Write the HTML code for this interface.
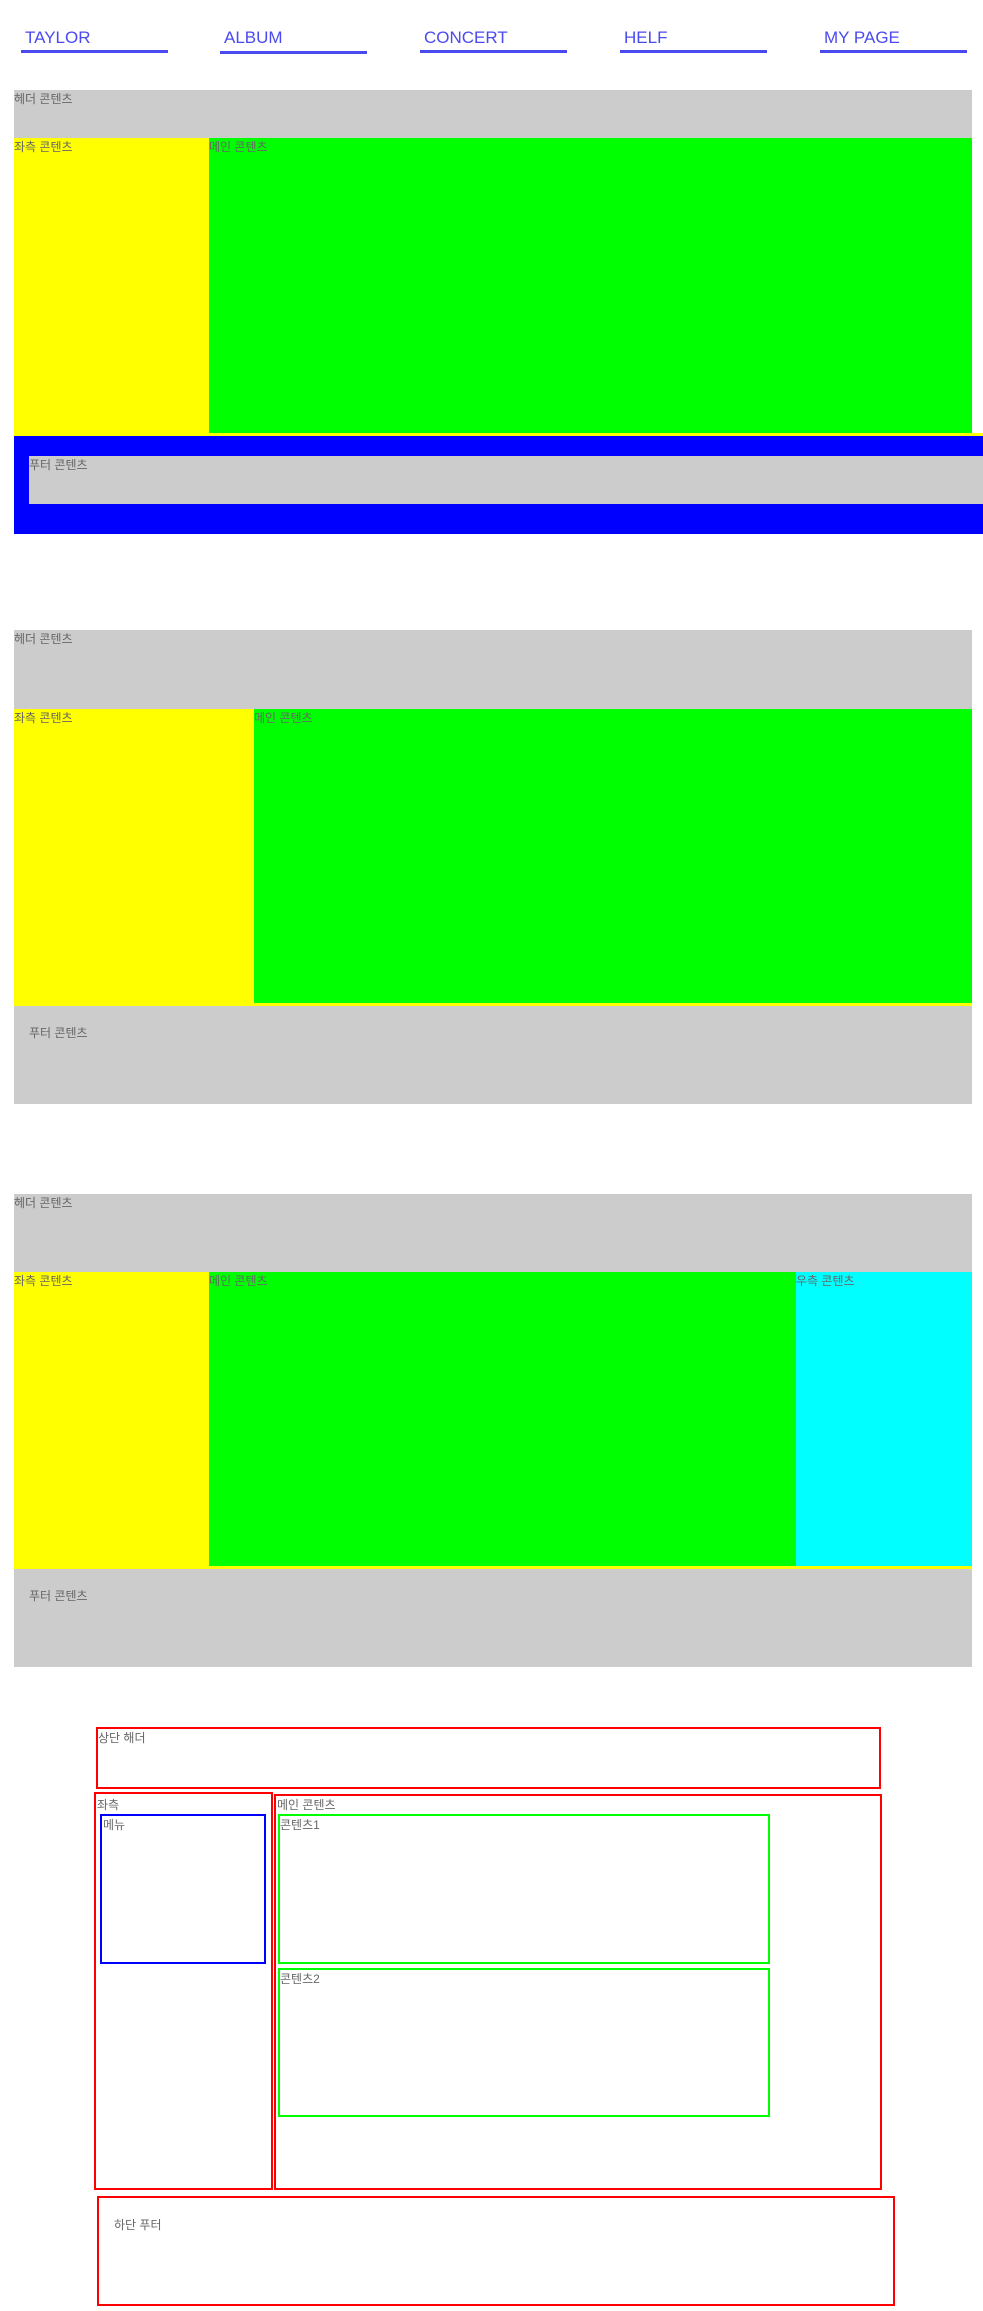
<!DOCTYPE html>
<html><head><meta charset="utf-8"><style>
*{margin:0;padding:0;box-sizing:border-box}
body{width:983px;height:2311px;position:relative;background:#fff;font-family:"Liberation Sans","Noto Sans CJK KR",sans-serif;overflow:hidden}
.a{position:absolute}
.t{font-size:12px;color:#666;line-height:14px}
.nav{position:absolute;top:29px;font-size:17px;color:#4a4af0;line-height:17px}
.ul{position:absolute;height:3px;background:#4a4af0;width:147px}
.b{position:absolute;border:2px solid red}
</style></head><body>
<div class="nav" style="left:25px">TAYLOR</div><div class="ul" style="left:21px;top:50px"></div>
<div class="nav" style="left:224px">ALBUM</div><div class="ul" style="left:220px;top:51px"></div>
<div class="nav" style="left:424px">CONCERT</div><div class="ul" style="left:420px;top:50px"></div>
<div class="nav" style="left:624px">HELF</div><div class="ul" style="left:620px;top:50px"></div>
<div class="nav" style="left:824px">MY PAGE</div><div class="ul" style="left:820px;top:50px"></div>

<!-- section 1 -->
<div class="a t" style="left:14px;top:90px;width:958px;height:48px;background:#ccc;padding-top:2px">헤더 콘텐츠</div>
<div class="a" style="left:14px;top:433px;width:969px;height:3px;background:#ff0"></div>
<div class="a t" style="left:14px;top:138px;width:195px;height:298px;background:#ff0;padding-top:2px">좌측 콘텐츠</div>
<div class="a t" style="left:209px;top:138px;width:763px;height:295px;background:#0f0;padding-top:2px">메인 콘텐츠</div>
<div class="a" style="left:14px;top:436px;width:969px;height:98px;background:#00f"></div>
<div class="a t" style="left:29px;top:456px;width:954px;height:48px;background:#ccc;padding-top:2px">푸터 콘텐츠</div>

<!-- section 2 -->
<div class="a t" style="left:14px;top:630px;width:958px;height:79px;background:#ccc;padding-top:2px">헤더 콘텐츠</div>
<div class="a" style="left:14px;top:1003px;width:958px;height:3px;background:#ff0"></div>
<div class="a t" style="left:14px;top:709px;width:240px;height:297px;background:#ff0;padding-top:2px">좌측 콘텐츠</div>
<div class="a t" style="left:254px;top:709px;width:718px;height:294px;background:#0f0;padding-top:2px">메인 콘텐츠</div>
<div class="a t" style="left:14px;top:1006px;width:958px;height:98px;background:#ccc;padding:20px 0 0 15px">푸터 콘텐츠</div>

<!-- section 3 -->
<div class="a t" style="left:14px;top:1194px;width:958px;height:78px;background:#ccc;padding-top:2px">헤더 콘텐츠</div>
<div class="a" style="left:14px;top:1565px;width:958px;height:4px;background:#ff0"></div>
<div class="a t" style="left:14px;top:1272px;width:195px;height:297px;background:#ff0;padding-top:2px">좌측 콘텐츠</div>
<div class="a t" style="left:209px;top:1272px;width:587px;height:294px;background:#0f0;padding-top:2px">메인 콘텐츠</div>
<div class="a t" style="left:796px;top:1272px;width:176px;height:294px;background:#0ff;padding-top:2px">우측 콘텐츠</div>
<div class="a t" style="left:14px;top:1569px;width:958px;height:98px;background:#ccc;padding:20px 0 0 15px">푸터 콘텐츠</div>

<!-- section 4 -->
<div class="b t" style="left:96px;top:1727px;width:785px;height:62px;padding-top:2px">상단 해더</div>
<div class="b t" style="left:94px;top:1792px;width:179px;height:398px;padding-top:4px;padding-left:1px">좌측</div>
<div class="b t" style="left:274px;top:1794px;width:608px;height:396px;padding-top:2px;padding-left:1px">메인 콘텐츠</div>
<div class="a t" style="left:100px;top:1814px;width:166px;height:150px;border:2px solid #00f;padding-top:2px;padding-left:1px">메뉴</div>
<div class="a t" style="left:278px;top:1814px;width:492px;height:150px;border:2px solid #0f0;padding-top:2px">콘텐츠1</div>
<div class="a t" style="left:278px;top:1968px;width:492px;height:149px;border:2px solid #0f0;padding-top:2px">콘텐츠2</div>
<div class="b t" style="left:97px;top:2196px;width:798px;height:110px;padding:20px 0 0 15px">하단 푸터</div>
</body></html>
